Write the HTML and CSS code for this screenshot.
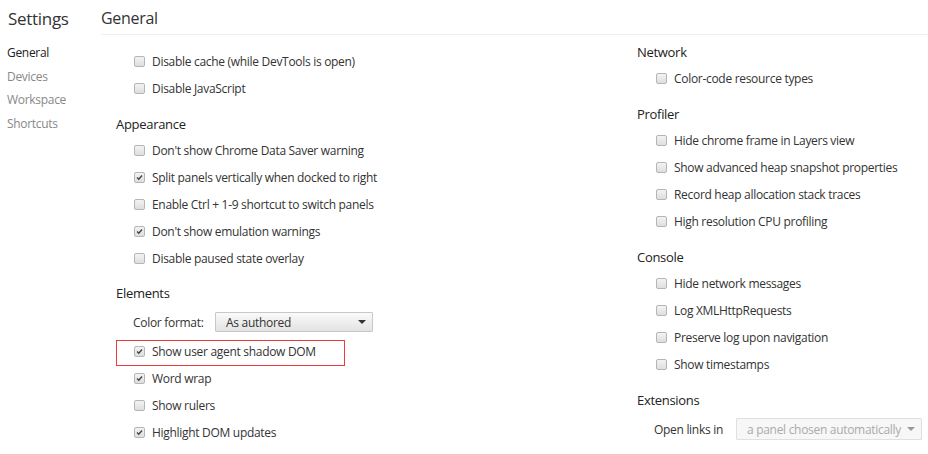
FILE: index.html
```html
<!DOCTYPE html>
<html>
<head>
<meta charset="utf-8">
<link rel="stylesheet" href="styles.css">
</head>
<body>
<div class="app">
  <nav class="sidebar">
    <div class="title">Settings</div>
    <ul class="tabs">
      <li class="tab active">General</li>
      <li class="tab">Devices</li>
      <li class="tab">Workspace</li>
      <li class="tab">Shortcuts</li>
    </ul>
  </nav>
  <main class="main">
    <header class="main-header">General</header>
    <div class="columns">
      <div class="col col-left">
        <section class="section first">
          <div class="item"><span class="cb"></span><span class="label">Disable cache (while DevTools is open)</span></div>
          <div class="item"><span class="cb"></span><span class="label">Disable JavaScript</span></div>
        </section>
        <section class="section appearance">
          <div class="sec-title">Appearance</div>
          <div class="item"><span class="cb"></span><span class="label">Don't show Chrome Data Saver warning</span></div>
          <div class="item"><span class="cb checked"><svg viewBox="0 0 11 11"><path d="M2.5 5.5 L4.6 7.6 L8.6 3" fill="none" stroke="#444" stroke-width="1.7"/></svg></span><span class="label">Split panels vertically when docked to right</span></div>
          <div class="item"><span class="cb"></span><span class="label">Enable Ctrl + 1-9 shortcut to switch panels</span></div>
          <div class="item"><span class="cb checked"><svg viewBox="0 0 11 11"><path d="M2.5 5.5 L4.6 7.6 L8.6 3" fill="none" stroke="#444" stroke-width="1.7"/></svg></span><span class="label">Don't show emulation warnings</span></div>
          <div class="item"><span class="cb"></span><span class="label">Disable paused state overlay</span></div>
        </section>
        <section class="section">
          <div class="sec-title">Elements</div>
          <div class="field field-left"><span class="field-label">Color format:</span><span class="select select-color">As authored<span class="arrow"></span></span></div>
          <div class="item highlight"><span class="cb checked"><svg viewBox="0 0 11 11"><path d="M2.5 5.5 L4.6 7.6 L8.6 3" fill="none" stroke="#444" stroke-width="1.7"/></svg></span><span class="label">Show user agent shadow DOM</span></div>
          <div class="item"><span class="cb checked"><svg viewBox="0 0 11 11"><path d="M2.5 5.5 L4.6 7.6 L8.6 3" fill="none" stroke="#444" stroke-width="1.7"/></svg></span><span class="label">Word wrap</span></div>
          <div class="item"><span class="cb"></span><span class="label">Show rulers</span></div>
          <div class="item"><span class="cb checked"><svg viewBox="0 0 11 11"><path d="M2.5 5.5 L4.6 7.6 L8.6 3" fill="none" stroke="#444" stroke-width="1.7"/></svg></span><span class="label">Highlight DOM updates</span></div>
        </section>
      </div>
      <div class="col col-right">
        <section class="section">
          <div class="sec-title">Network</div>
          <div class="item"><span class="cb"></span><span class="label">Color-code resource types</span></div>
        </section>
        <section class="section">
          <div class="sec-title">Profiler</div>
          <div class="item"><span class="cb"></span><span class="label">Hide chrome frame in Layers view</span></div>
          <div class="item"><span class="cb"></span><span class="label">Show advanced heap snapshot properties</span></div>
          <div class="item"><span class="cb"></span><span class="label">Record heap allocation stack traces</span></div>
          <div class="item"><span class="cb"></span><span class="label">High resolution CPU profiling</span></div>
        </section>
        <section class="section">
          <div class="sec-title">Console</div>
          <div class="item"><span class="cb"></span><span class="label">Hide network messages</span></div>
          <div class="item"><span class="cb"></span><span class="label">Log XMLHttpRequests</span></div>
          <div class="item"><span class="cb"></span><span class="label">Preserve log upon navigation</span></div>
          <div class="item"><span class="cb"></span><span class="label">Show timestamps</span></div>
        </section>
        <section class="section">
          <div class="sec-title">Extensions</div>
          <div class="field field-right"><span class="field-label">Open links in</span><span class="select select-ext disabled">a panel chosen automatically<span class="arrow"></span></span></div>
        </section>
      </div>
    </div>
  </main>
</div>
</body>
</html>
```
FILE: styles.css
```css
* { box-sizing: border-box; }
html, body { margin: 0; padding: 0; background: #fff; }
body {
  font-family: "Open Sans", "Noto Sans", sans-serif;
  font-size: 12px;
  letter-spacing: -0.3px;
  color: #333;
  width: 928px;
  height: 454px;
  overflow: hidden;
}
.app { display: flex; height: 454px; }
.sidebar { width: 101px; flex: none; }
.title {
  font-size: 17px;
  color: #333;
  padding-left: 8px;
  height: 37px;
  line-height: 37px;
}
.tabs { list-style: none; margin: 0; padding: 4px 0 0 7px; }
.tab { height: 23.5px; line-height: 23.5px; color: #888; font-size: 12px; }
.tab.active { color: #222; }

.main { flex: 1; }
.main-header {
  font-size: 16px;
  color: #333;
  height: 35px;
  line-height: 36px;
  border-bottom: 1px solid #eee;
}
.columns { display: flex; padding-top: 3px; }
.col-left { width: 536px; padding-left: 15px; }
.col-right { flex: 1; padding-top: 1px; }
.section { margin-bottom: 9px; }
.section.first { padding-top: 10px; margin-bottom: 9px; }
.section.appearance { margin-bottom: 8px; }
.sec-title { height: 26px; line-height: 26px; font-size: 13px; color: #222; }
.item {
  height: 27px;
  display: flex;
  align-items: center;
  padding-left: 18px;
}
.col-right .item { padding-left: 19px; }
.cb {
  width: 11px;
  height: 11px;
  border: 1px solid #b5b5b5;
  border-radius: 2px;
  background: linear-gradient(#f3f3f3, #dedede);
  margin-right: 7px;
  flex: none;
  display: flex;
}
.cb svg { width: 9px; height: 9px; }
.label { white-space: nowrap; }
.highlight { position: relative; }
.highlight::after {
  content: "";
  position: absolute;
  left: 0;
  top: 2px;
  width: 227px;
  height: 24px;
  border: 1px solid #ee3b3b;
}
.field { display: flex; align-items: center; height: 32px; }
.field-left { padding-left: 17px; }
.field-right { padding-left: 17px; height: 32px; }
.field-label { width: 82px; flex: none; }
.select {
  position: relative;
  display: flex;
  align-items: center;
  height: 20px;
  padding-left: 10px;
  border: 1px solid #c8c8c8;
  border-radius: 1px;
  background: linear-gradient(#fafafa, #e3e3e3);
  color: #333;
}
.select-color { width: 158px; }
.select-ext { width: 186px; height: 22px; }
.select.disabled { color: #aaa; background: #f7f7f7; border-color: #e0e0e0; }
.arrow {
  position: absolute;
  right: 6px;
  top: 50%;
  margin-top: -2px;
  border-left: 4px solid transparent;
  border-right: 4px solid transparent;
  border-top: 4px solid #333;
}
.select.disabled .arrow { border-top-color: #999; }
```
